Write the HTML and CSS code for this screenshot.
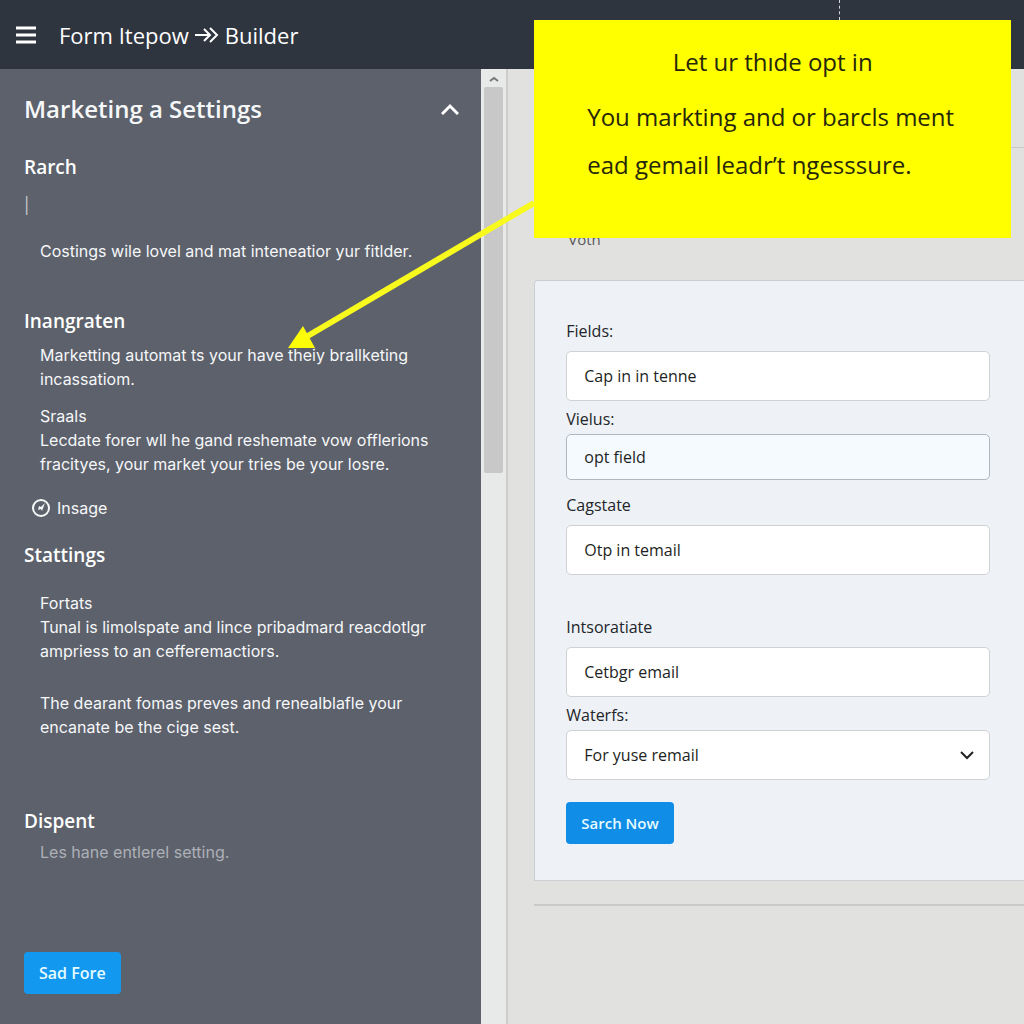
FILE: index.html
```
<!DOCTYPE html>
<html lang="en">
<head>
    <meta charset="UTF-8">
    <meta name="viewport" content="width=device-width, initial-scale=1.0">
    <title>Form Itepow Builder</title>
    <link rel="stylesheet" href="styles.css">
</head>
<body>

    <header class="topbar">
        <button type="button" class="menu-btn" aria-label="Menu">
            <svg width="20" height="18" viewBox="0 0 20 18" fill="none" stroke="currentColor" stroke-width="3">
                <path d="M0 2h20M0 9h20M0 16h20"/>
            </svg>
        </button>
        <h1>
            Form Itepow
            <svg width="24" height="16" viewBox="0 0 24 16" fill="none" stroke="currentColor" stroke-width="2">
                <path d="M0 8h14M9 2l6 6-6 6M15 1l7 7-7 7"/>
            </svg>
            Builder
        </h1>
    </header>

    <div class="workspace">
        <aside class="sidebar">
            <div class="sidebar-title">
                <h2>Marketing a Settings</h2>
                <button type="button" class="collapse-btn" aria-label="Collapse">
                    <svg width="18" height="12" viewBox="0 0 18 12" fill="none" stroke="currentColor" stroke-width="3">
                        <path d="M1 11l8-8 8 8"/>
                    </svg>
                </button>
            </div>

            <section class="section section-search">
                <label for="search">Rarch</label>
                <input type="text" id="search" value="|">
                <p>Costings wile lovel and mat inteneatior yur fitlder.</p>
            </section>

            <section class="section section-integration">
                <h3>Inangraten</h3>
                <p>Marketting automat ts your have theiy brallketing<br>incassatiom.</p>
                <h4>Sraals</h4>
                <p>Lecdate forer wll he gand reshemate vow offlerions<br>fracityes, your market your tries be your losre.</p>
                <a href="#" class="insage">
                    <svg width="18" height="18" viewBox="0 0 18 18" fill="none" stroke="currentColor" stroke-width="2">
                        <circle cx="9" cy="9" r="8"/>
                        <path d="M13 4l-3 8-1-2-3 1 1-4 2 1z" fill="currentColor" stroke="none"/>
                    </svg>
                    Insage
                </a>
            </section>

            <section class="section section-settings">
                <h3>Stattings</h3>
                <h4>Fortats</h4>
                <p>Tunal is limolspate and lince pribadmard reacdotlgr<br>ampriess to an cefferemactiors.</p>
                <p class="note">The dearant fomas preves and renealblafle your<br>encanate be the cige sest.</p>
            </section>

            <section class="section section-display">
                <h3>Dispent</h3>
                <p class="muted">Les hane entlerel setting.</p>
            </section>

            <button type="button" class="btn-primary btn-save">Sad Fore</button>
        </aside>

        <div class="scrollbar">
            <svg width="10" height="6" viewBox="0 0 10 6" fill="none" stroke="#777777" stroke-width="2">
                <path d="M1 5l4-3 4 3"/>
            </svg>
            <div class="scrollbar-thumb"></div>
        </div>

        <main class="content">
            <div class="content-top"></div>
            <p class="content-label">Votn</p>

            <form class="form-card">
                <div class="form-group">
                    <label for="fields">Fields:</label>
                    <input type="text" id="fields" value="Cap in in tenne">
                </div>
                <div class="form-group compact">
                    <label for="vielus">Vielus:</label>
                    <input type="text" id="vielus" class="active" value="opt field">
                </div>
                <div class="form-group">
                    <label for="cagstate">Cagstate</label>
                    <input type="text" id="cagstate" value="Otp in temail">
                </div>
                <div class="form-group spaced">
                    <label for="intsoratiate">Intsoratiate</label>
                    <input type="text" id="intsoratiate" value="Cetbgr email">
                </div>
                <div class="form-group compact">
                    <label for="waterfs">Waterfs:</label>
                    <div class="select-wrap">
                        <select id="waterfs">
                            <option>For yuse remail</option>
                        </select>
                        <svg width="14" height="9" viewBox="0 0 14 9" fill="none" stroke="#222222" stroke-width="2">
                            <path d="M1 1l6 6 6-6"/>
                        </svg>
                    </div>
                </div>
                <button type="button" class="btn-primary">Sarch Now</button>
            </form>

            <hr>

            <div class="callout">
                <p class="callout-title">Let ur thıde opt in</p>
                <p>You markting and or barcls ment<br>ead gemail leadr’t ngesssure.</p>
                <svg class="callout-arrow" width="246" height="152" viewBox="0 0 246 152">
                    <path d="M246 5L18 139" stroke="#f8fa1e" stroke-width="6"/>
                    <path d="M0 150l15-22 12 22z" fill="#fcfc08"/>
                </svg>
            </div>
        </main>
    </div>

</body>
</html>
```
FILE: styles.css
```
* {
    box-sizing: border-box;
}

body {
    font-family: "Open Sans", "Noto Sans", sans-serif;
    font-size: 16px;
    line-height: 24px;
    margin: 0;
    min-height: 100vh;
    display: flex;
    flex-direction: column;
    background: #e1e1e0;
    color: #22252a;
}

h1, h2, h3, h4, p {
    margin: 0;
}

button, input, select {
    font: inherit;
}

button {
    cursor: pointer;
}

/* Top bar */
.topbar {
    display: flex;
    align-items: center;
    gap: 23px;
    height: 69px;
    padding: 0 16px;
    background: #2f353f;
    color: #ffffff;
}

.topbar h1 {
    display: flex;
    align-items: center;
    gap: 6px;
    font-size: 22px;
    font-weight: 500;
}

.menu-btn,
.collapse-btn {
    display: flex;
    padding: 0;
    border: none;
    background: none;
    color: #ffffff;
}

.workspace {
    flex: 1;
    display: flex;
}

/* Sidebar */
.sidebar {
    width: 47%;
    display: flex;
    flex-direction: column;
    padding: 24px 22px 30px 24px;
    background: #5c616b;
    color: #f6f7f9;
}

.sidebar-title {
    display: flex;
    justify-content: space-between;
    align-items: center;
}

.sidebar-title h2 {
    font-size: 24px;
    line-height: 32px;
    font-weight: 600;
}

.section {
    display: flex;
    flex-direction: column;
    font-family: "Inter", "Open Sans", sans-serif;
}

.section h3,
.section label {
    font-family: "Open Sans", "Noto Sans", sans-serif;
    font-size: 19px;
    font-weight: 600;
    color: #ffffff;
}

.section h4 {
    font-size: 16px;
    font-weight: 400;
}

.section h4,
.section p {
    padding-left: 16px;
    white-space: nowrap;
}

.section-search {
    margin-top: 30px;
}

.section-search input {
    height: 24px;
    margin: 14px 0 22px;
    padding: 0;
    border: none;
    background: none;
    color: #c4c7cc;
}

.section-integration {
    margin-top: 46px;
}

.section-integration h3 {
    margin-bottom: 10px;
}

.section-integration h4 {
    margin-top: 13px;
}

.insage {
    display: flex;
    align-items: center;
    gap: 7px;
    margin-top: 20px;
    padding-left: 8px;
    color: inherit;
    text-decoration: none;
}

.section-settings {
    margin-top: 23px;
}

.section-settings h3 {
    margin-bottom: 24px;
}

.section-settings .note {
    margin-top: 28px;
}

.section-display {
    margin-top: 70px;
}

.section-display .muted {
    margin-top: 7px;
    color: #adb0b7;
}

.btn-primary {
    height: 42px;
    padding: 0 15px;
    border: none;
    border-radius: 4px;
    background: #0f8de7;
    color: #e6fbff;
    font-size: 15px;
    font-weight: 600;
}

.btn-save {
    align-self: flex-start;
    margin-top: auto;
    background: #1298ef;
    font-size: 16px;
}

/* Scrollbar between the panels */
.scrollbar {
    width: 27px;
    display: flex;
    flex-direction: column;
    align-items: center;
    gap: 5px;
    padding: 7px 3px 0 3px;
    border-right: 2px solid #cdcdcd;
    background: #e8e9e9;
}

.scrollbar-thumb {
    width: 100%;
    height: 386px;
    border-radius: 2px;
    background: #c8c8c8;
}

/* Right side */
.content {
    position: relative;
    flex: 1;
    padding-left: 26px;
}

.content-top {
    height: 79px;
    border-bottom: 1px solid #c8c8c8;
}

.content-label {
    margin: 79px 0 29px 34px;
    font-size: 15px;
    color: #5a5a5a;
}

.form-card {
    padding: 38px 34px 36px 31px;
    border: 1px solid #cccfd1;
    border-right: none;
    border-radius: 4px 0 0 0;
    background: #eef1f5;
}

.form-group {
    display: flex;
    flex-direction: column;
    gap: 8px;
    margin-top: 13px;
}

.form-group:first-child {
    margin-top: 0;
}

.form-group.compact {
    gap: 3px;
    margin-top: 6px;
}

.form-group.spaced {
    margin-top: 40px;
}

.form-group input,
.form-group select {
    width: 100%;
    height: 50px;
    padding: 0 17px;
    border: 1px solid #cfd1d2;
    border-radius: 5px;
    background: #ffffff;
    color: #1d1f22;
}

.form-group input.active {
    height: 46px;
    border-color: #b0b8be;
    background: #f4fafd;
}

.select-wrap {
    position: relative;
}

.select-wrap select {
    display: block;
    appearance: none;
}

.select-wrap svg {
    position: absolute;
    top: 21px;
    right: 16px;
    pointer-events: none;
}

.form-card .btn-primary {
    margin-top: 22px;
}

hr {
    margin: 23px 0 0;
    border: none;
    border-top: 2px solid #c9c9c9;
}

/* Callout laid over the header and the form */
.callout {
    position: absolute;
    top: -49px;
    left: 26px;
    right: 13px;
    height: 218px;
    padding: 24px 24px 0 53px;
    background: #ffff00;
    color: #26260a;
    font-size: 24px;
    line-height: 48px;
    white-space: nowrap;
}

.callout-title {
    line-height: 36px;
    margin-bottom: 13px;
    padding-right: 29px;
    text-align: center;
}

.callout::before {
    content: "";
    position: absolute;
    top: -20px;
    left: 305px;
    height: 20px;
    border-left: 1px dashed #d5d8dc;
}

.callout-arrow {
    position: absolute;
    top: 178px;
    right: 100%;
}
```
